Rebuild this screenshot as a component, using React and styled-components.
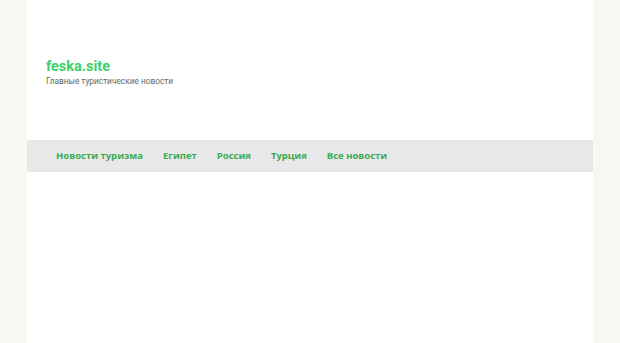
import React from "react";
import styled, { createGlobalStyle } from "styled-components";

const Global = createGlobalStyle`
  html, body { margin: 0; padding: 0; background: #f8f7f3; }
  body { font-family: Roboto, "Noto Sans", sans-serif; }
`;

const Page = styled.div`
  width: 566px;
  margin: 0 0 0 27px;
  min-height: 343px;
  background: #ffffff;
`;

const Header = styled.header`
  padding: 58px 19px 0;
  height: 140px;
  box-sizing: border-box;
`;

const Title = styled.a`
  display: block;
  font-family: Roboto, sans-serif;
  font-weight: 700;
  font-size: 14.5px;
  line-height: 18px;
  color: #3dd06c;
  text-decoration: none;
`;

const Tagline = styled.p`
  margin: 0;
  font-family: Roboto, sans-serif;
  font-size: 8.3px;
  line-height: 11px;
  color: #666666;
`;

const Nav = styled.nav`
  display: flex;
  align-items: center;
  gap: 20px;
  height: 32px;
  padding: 0 29px 1px;
  box-sizing: border-box;
  background: #e8e8e8;
`;

const NavLink = styled.a`
  font-family: "Open Sans", sans-serif;
  font-weight: 700;
  font-size: 9.5px;
  color: #3aac52;
  text-decoration: none;
`;

const items = ["Новости туризма", "Египет", "Россия", "Турция", "Все новости"];

export default function App() {
  return (
    <>
      <Global />
      <Page>
        <Header>
          <Title href="#">feska.site</Title>
          <Tagline>Главные туристические новости</Tagline>
        </Header>
        <Nav>
          {items.map((t) => (
            <NavLink key={t} href="#">{t}</NavLink>
          ))}
        </Nav>
      </Page>
    </>
  );
}
